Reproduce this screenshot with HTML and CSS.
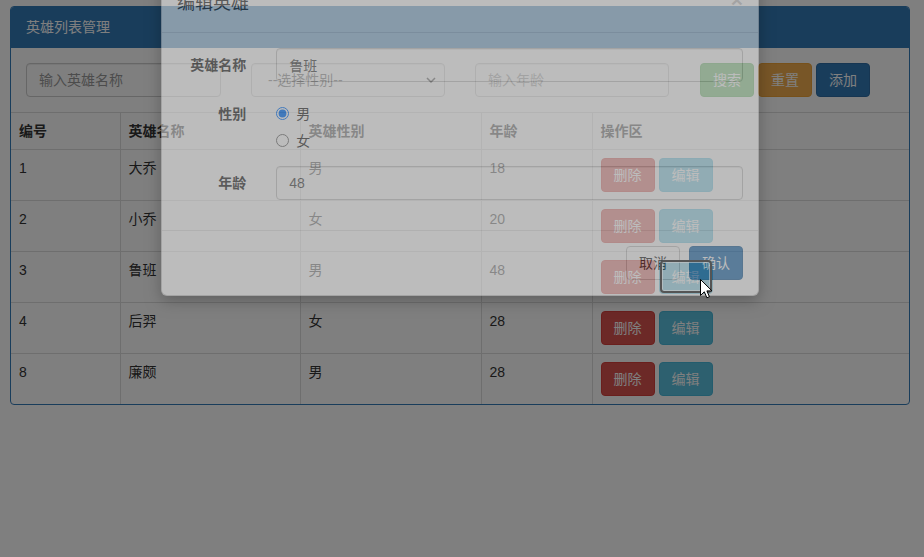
FILE: index.html
```html
<!DOCTYPE html>
<html lang="zh">
<head>
<meta charset="utf-8">
<title>英雄列表管理</title>
<link rel="stylesheet" href="styles.css">
</head>
<body>
<div class="panel">
  <div class="panel-heading">英雄列表管理</div>
  <div class="panel-body">
    <form class="search">
      <input class="form-control w-name" placeholder="输入英雄名称">
      <div class="form-control select w-sex"><span>--选择性别--</span><svg class="chev" width="10" height="6" viewBox="0 0 10 6"><path d="M1 1 L5 5 L9 1" fill="none" stroke="#333" stroke-width="1.5"/></svg></div>
      <input class="form-control w-age" placeholder="输入年龄">
      <div class="btns">
        <button type="button" class="btn btn-success">搜索</button>
        <button type="button" class="btn btn-warning">重置</button>
        <button type="button" class="btn btn-primary">添加</button>
      </div>
    </form>
  </div>
  <table class="table">
    <colgroup>
      <col class="c1"><col class="c2"><col class="c3"><col class="c4"><col class="c5">
    </colgroup>
    <thead>
      <tr><th>编号</th><th>英雄名称</th><th>英雄性别</th><th>年龄</th><th>操作区</th></tr>
    </thead>
    <tbody>
      <tr><td>1</td><td>大乔</td><td>男</td><td>18</td><td><button type="button" class="btn btn-danger">删除</button><button type="button" class="btn btn-info">编辑</button></td></tr>
      <tr><td>2</td><td>小乔</td><td>女</td><td>20</td><td><button type="button" class="btn btn-danger">删除</button><button type="button" class="btn btn-info">编辑</button></td></tr>
      <tr><td>3</td><td>鲁班</td><td>男</td><td>48</td><td><button type="button" class="btn btn-danger">删除</button><button type="button" class="btn btn-info">编辑</button></td></tr>
      <tr><td>4</td><td>后羿</td><td>女</td><td>28</td><td><button type="button" class="btn btn-danger">删除</button><button type="button" class="btn btn-info">编辑</button></td></tr>
      <tr><td>8</td><td>廉颇</td><td>男</td><td>28</td><td><button type="button" class="btn btn-danger">删除</button><button type="button" class="btn btn-info">编辑</button></td></tr>
    </tbody>
  </table>
</div>

<div class="backdrop"></div>

<div class="modal">
  <div class="modal-content">
    <div class="modal-header">
      <span class="close">×</span>
      <h4 class="modal-title">编辑英雄</h4>
    </div>
    <div class="modal-body">
      <div class="form-group">
        <label class="control-label">英雄名称</label>
        <div class="field"><input class="form-control full" value="鲁班"></div>
      </div>
      <div class="form-group">
        <label class="control-label">性别</label>
        <div class="field">
          <label class="radio"><input type="radio" name="sex" checked><span>男</span></label>
          <label class="radio"><input type="radio" name="sex"><span>女</span></label>
        </div>
      </div>
      <div class="form-group">
        <label class="control-label">年龄</label>
        <div class="field"><input class="form-control full" value="48"></div>
      </div>
    </div>
    <div class="modal-footer">
      <button type="button" class="btn btn-default">取消</button>
      <button type="button" class="btn btn-primary">确认</button>
    </div>
  </div>
</div>

<div class="focus-ring"></div>
<svg class="cursor" width="13" height="20" viewBox="0 0 13 20"><path d="M0.5 0.5 V16.5 L4.3 12.8 L6.9 18.8 L9.4 17.7 L6.9 11.9 H12 Z" fill="#fff" stroke="#000" stroke-width="1" stroke-linejoin="round"/></svg>
</body>
</html>
```

FILE: styles.css
```css
* { box-sizing: border-box; }
html, body { margin: 0; padding: 0; }
body {
  width: 924px;
  height: 557px;
  overflow: hidden;
  position: relative;
  background: #fff;
  color: #333;
  font-family: "Liberation Sans", Arial, "Noto Sans CJK SC", sans-serif;
  font-size: 14px;
  line-height: 20px;
}

.panel {
  margin: 6px 0 0 10px;
  width: 900px;
  border: 1px solid #337ab7;
  border-radius: 4px;
  overflow: hidden;
  background: #fff;
}
.panel-heading {
  background: #337ab7;
  color: #fff;
  padding: 10px 15px;
  height: 41px;
  border-bottom: 1px solid #337ab7;
}
.panel-body {
  padding: 15px;
  border-bottom: 1px solid #ddd;
}

.search { display: flex; align-items: center; margin: 0; }
.form-control {
  display: block;
  height: 34px;
  padding: 6px 12px;
  font: inherit;
  color: #555;
  background: #fff;
  border: 1px solid #ccc;
  border-radius: 4px;
  box-shadow: inset 0 1px 1px rgba(0,0,0,.075);
  outline: none;
}
.form-control::placeholder { color: #999; }
.w-name { width: 195px; margin-right: 30px; }
.w-sex { width: 194px; margin-right: 30px; }
.w-age { width: 194px; margin-right: 31px; }
.select { display: flex; align-items: center; justify-content: space-between; padding-left: 16px; padding-right: 8px; }
.chev { display: block; }
.btns { display: flex; gap: 4px; }

.btn {
  display: inline-block;
  height: 34px;
  padding: 6px 12px;
  font: inherit;
  line-height: 20px;
  border: 1px solid transparent;
  border-radius: 4px;
  color: #fff;
  cursor: pointer;
  white-space: nowrap;
  vertical-align: top;
}
.btn-success { background: #5cb85c; border-color: #4cae4c; }
.btn-warning { background: #f0ad4e; border-color: #eea236; }
.btn-primary { background: #337ab7; border-color: #2e6da4; }
.btn-danger { background: #d9534f; border-color: #d43f3a; }
.btn-info { background: #5bc0de; border-color: #46b8da; }
.btn-default { background: #fff; border-color: #ccc; color: #333; }

.table {
  width: 898px;
  border-collapse: collapse;
  table-layout: fixed;
}
.c1 { width: 109px; }
.c2 { width: 180px; }
.c3 { width: 181px; }
.c4 { width: 111px; }
.c5 { width: 317px; }
.table th, .table td {
  padding: 8px;
  text-align: left;
  vertical-align: top;
  border: 1px solid #ddd;
}
.table th { font-weight: bold; border-top: 0; }
.table tr > :first-child { border-left: 0; }
.table tr > :last-child { border-right: 0; }
.table tbody tr:last-child td { border-bottom: 0; }
.table td .btn + .btn { margin-left: 4px; }

.backdrop {
  position: absolute;
  inset: 0;
  background: rgba(0,0,0,.5);
}

.modal {
  position: absolute;
  left: 161px;
  top: -25px;
  width: 598px;
  opacity: .48;
}
.modal-content {
  background: #fff;
  border: 1px solid rgba(0,0,0,.2);
  border-radius: 6px;
  box-shadow: 0 5px 15px rgba(0,0,0,.5);
}
.modal-header {
  padding: 15px;
  border-bottom: 1px solid #e5e5e5;
}
.modal-title {
  margin: 0;
  font-size: 18px;
  font-weight: normal;
  line-height: 25.7px;
}
.close {
  float: right;
  margin-top: -2px;
  font-size: 21px;
  font-weight: bold;
  line-height: 1;
  color: #000;
  opacity: .2;
}
.modal-body { padding: 15px; }
.form-group {
  display: grid;
  grid-template-columns: 2fr 10fr;
  margin: 0 -15px 15px;
}
.control-label {
  padding: 7px 15px 0;
  text-align: right;
  font-weight: bold;
}
.field { padding: 0 15px; }
.full { width: 100%; }
.radio {
  display: flex;
  align-items: center;
  padding-top: 7px;
  height: 27px;
}
.radio input { margin: 0 7px 0 0; width: 13px; height: 13px; }
.modal-footer {
  padding: 15px;
  border-top: 1px solid #e5e5e5;
  display: flex;
  justify-content: flex-end;
  gap: 9px;
}

.focus-ring {
  position: absolute;
  left: 660px;
  top: 260px;
  width: 52px;
  height: 33px;
  border: 2px solid #555;
  border-radius: 4px;
  box-shadow: inset 0 0 0 1px rgba(200,200,200,.6);
}
.cursor {
  position: absolute;
  left: 700px;
  top: 279px;
}
```
